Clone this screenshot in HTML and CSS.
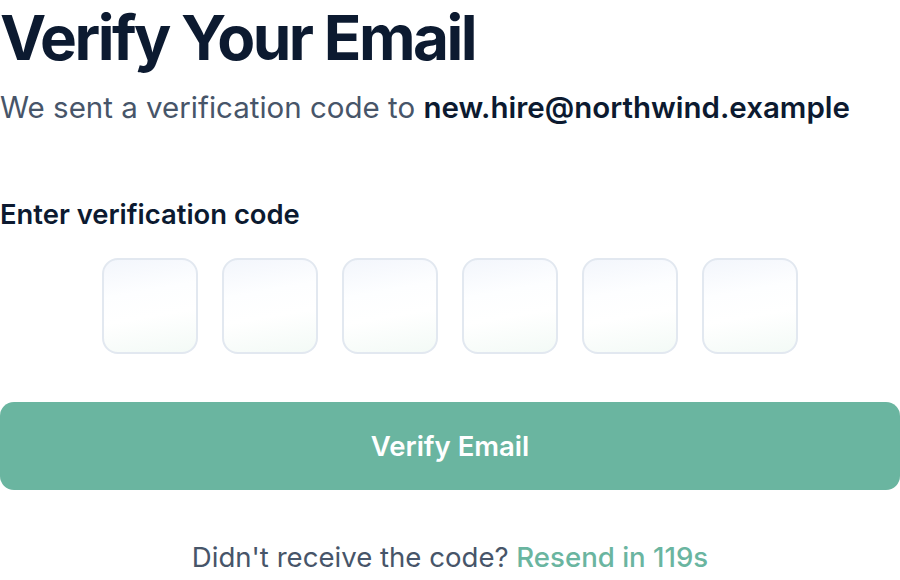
FILE: index.html
```html
<!DOCTYPE html>
<html lang="en">
  <head>
    <meta charset="UTF-8" />
    <meta name="viewport" content="width=device-width, initial-scale=1.0" />
    <title>Verify Your Email</title>
    <link rel="stylesheet" href="styles.css">
  </head>
  <body>
    <div class="verify">
      <h1 class="verify-title">Verify Your Email</h1>
      <p class="verify-sub">We sent a verification code to <strong>new.hire@northwind.example</strong></p>

      <label class="code-label">Enter verification code</label>
      <div class="code-boxes">
        <input class="code-box" type="text" maxlength="1" />
        <input class="code-box" type="text" maxlength="1" />
        <input class="code-box" type="text" maxlength="1" />
        <input class="code-box" type="text" maxlength="1" />
        <input class="code-box" type="text" maxlength="1" />
        <input class="code-box" type="text" maxlength="1" />
      </div>

      <button class="verify-btn">Verify Email</button>

      <p class="resend">Didn't receive the code? <a href="#" class="resend-link">Resend in 119s</a></p>
    </div>
  </body>
</html>
```

FILE: styles.css
```css
body {
  margin: 0;
  background: #fff;
  font-family: Inter, "Noto Sans", sans-serif;
}
.verify {
  width: 900px;
}
.verify-title {
  margin: 0;
  font-size: 62px;
  line-height: 75px;
  font-weight: 700;
  letter-spacing: -2.5px;
  color: #0c1a30;
}
.verify-sub {
  margin: 12px 0 0;
  font-size: 29.5px;
  line-height: 40px;
  color: #475569;
}
.verify-sub strong {
  color: #0c1a30;
  font-weight: 600;
}
.code-label {
  display: block;
  margin-top: 69px;
  font-size: 27.4px;
  line-height: 36px;
  font-weight: 600;
  color: #0c1a30;
}
.code-boxes {
  display: flex;
  justify-content: center;
  gap: 24px;
  margin-top: 26px;
}
.code-box {
  box-sizing: border-box;
  width: 96px;
  height: 96px;
  border: 2px solid #e2e8f0;
  border-radius: 16px;
  background: linear-gradient(170deg, #f3f6fc 0%, #fdfeff 35%, #ffffff 60%, #f3faf6 100%);
  outline: none;
}
.verify-btn {
  display: block;
  width: 100%;
  height: 88px;
  margin-top: 48px;
  border: none;
  border-radius: 14px;
  background: #6ab5a0;
  color: #fff;
  font-family: inherit;
  font-size: 27.5px;
  font-weight: 600;
  cursor: pointer;
}
.resend {
  margin: 49px 0 0;
  text-align: center;
  font-size: 27.6px;
  line-height: 36px;
  color: #475569;
}
.resend-link {
  color: #6ab5a0;
  font-weight: 500;
  text-decoration: none;
}
```
